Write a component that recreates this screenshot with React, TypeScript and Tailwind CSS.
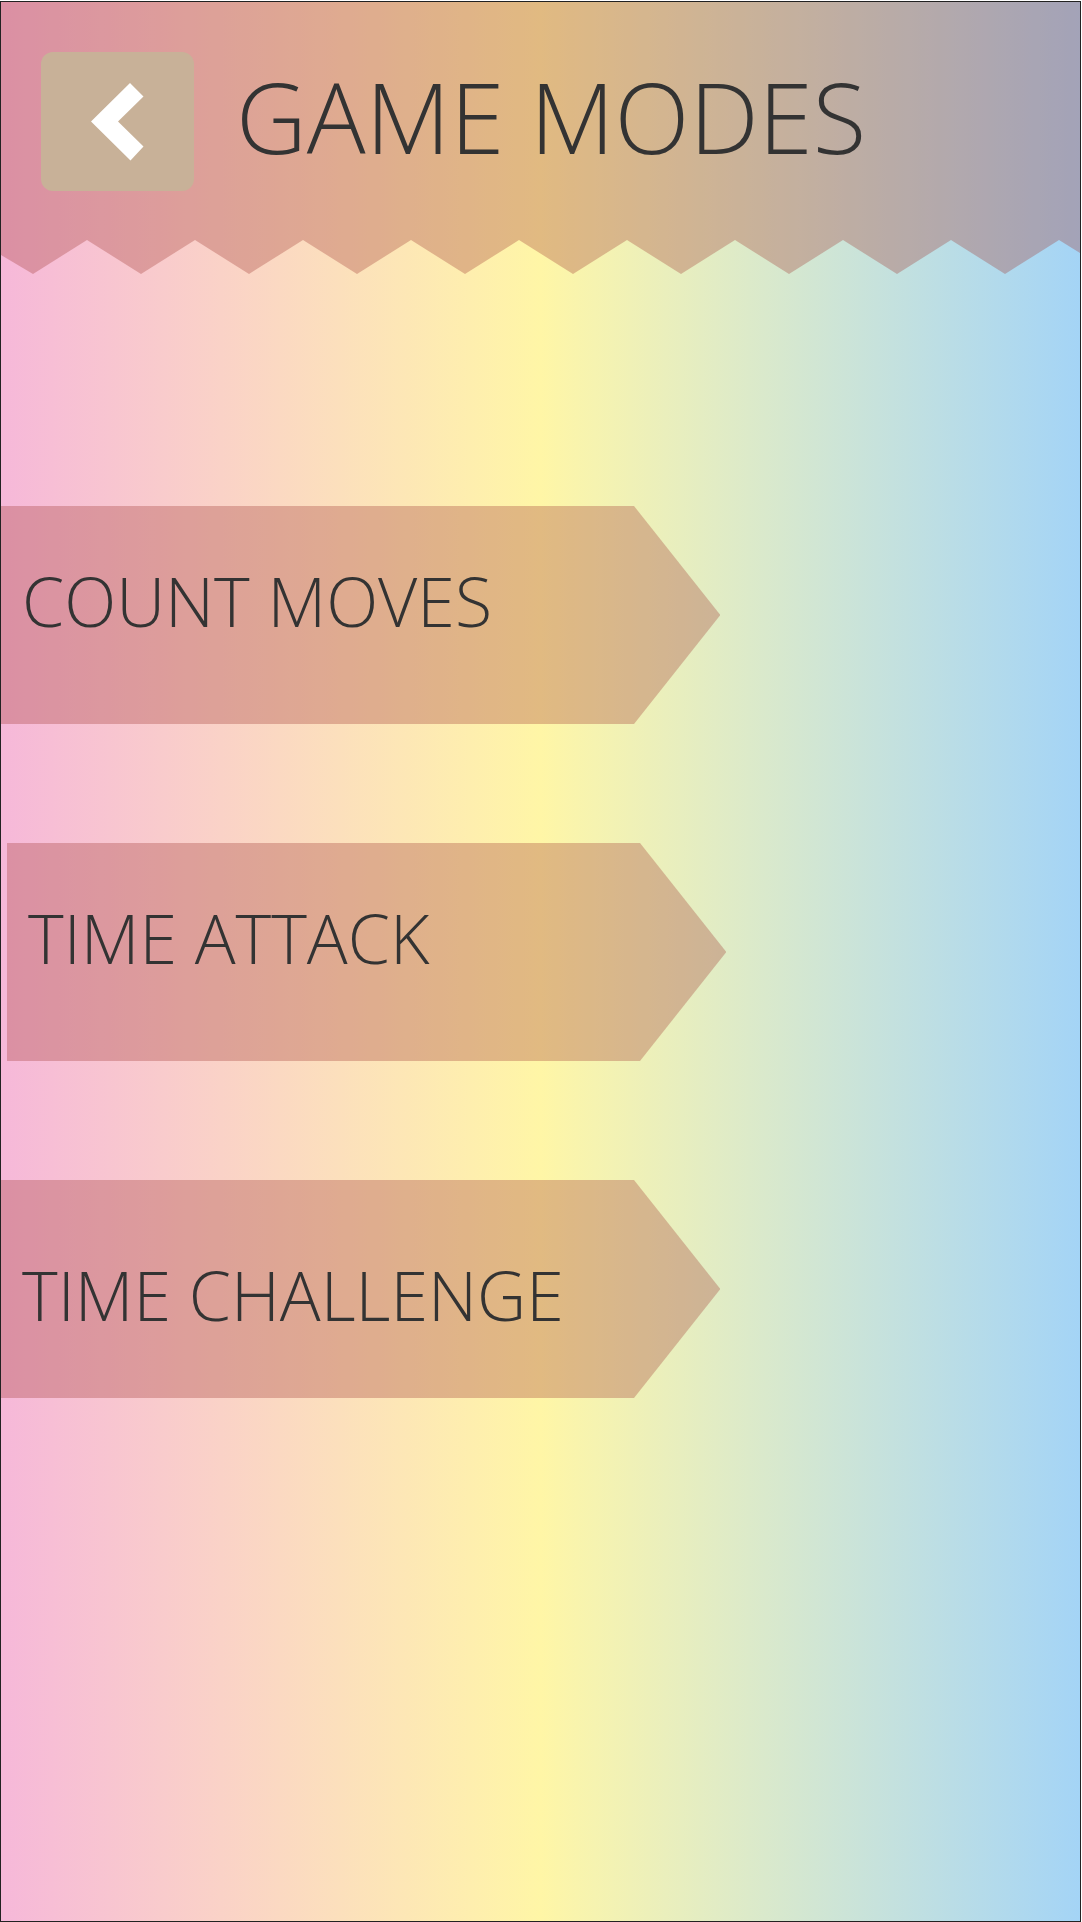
type Mode = { label: string; row: string; text: string };

const modes: Mode[] = [
  { label: "COUNT MOVES", row: "", text: "pb-7" },
  { label: "TIME ATTACK", row: "ml-[6px] -mr-[6px]", text: "pb-7" },
  { label: "TIME CHALLENGE", row: "", text: "pt-3" },
];

function Zigzag() {
  const points = ["0,0", "0,15", "32,34"];
  for (let i = 0; i < 10; i++) {
    points.push(`${86 + i * 108},0`);
    if (i < 9) points.push(`${140 + i * 108},34`);
  }
  points.push("1079,13", "1079,0");
  return (
    <svg
      className="block h-[34px] w-full fill-[#a13a35]/32"
      viewBox="0 0 1079 34"
      preserveAspectRatio="none"
      aria-hidden="true"
    >
      <polygon points={points.join(" ")} />
    </svg>
  );
}

export default function App() {
  return (
    <div className="flex min-h-screen bg-white pt-px pr-px font-['Open_Sans','Noto_Sans',sans-serif] font-light text-[#333333]">
      <div className="flex flex-1 flex-col border border-[#222222] bg-linear-to-r from-[#f6b8d9] via-[#fff6a6] to-[#a4d4f6]">
        <header>
          <div className="flex items-start gap-[42px] bg-[#a13a35]/32 px-10 pt-[50px] pb-[49px]">
            <button
              type="button"
              aria-label="Back"
              className="flex h-[139px] w-[153px] shrink-0 items-center justify-center rounded-[12px] bg-[#c8b198]"
            >
              <svg className="h-[78px] w-[53px] fill-white" viewBox="0 0 53 78" aria-hidden="true">
                <path d="M39 0 52.500 13.500 27 38.500 52.500 63.500 39.500 77.500 0 38.500Z" />
              </svg>
            </button>
            <h1 className="pt-2 text-[98px] leading-[112px] whitespace-nowrap">GAME MODES</h1>
          </div>
          <Zigzag />
        </header>
        <nav className="mt-[232px] flex flex-col gap-[119px]">
          {modes.map((m) => (
            <div key={m.label} className={m.row}>
              <button
                type="button"
                className={`flex h-[218px] w-2/3 items-center bg-[#a13a35]/32 pl-[21px] text-left text-[68px] leading-[80px] whitespace-nowrap [clip-path:polygon(0_0,88%_0,100%_50%,88%_100%,0_100%)] ${m.text}`}
              >
                {m.label}
              </button>
            </div>
          ))}
        </nav>
      </div>
    </div>
  );
}
